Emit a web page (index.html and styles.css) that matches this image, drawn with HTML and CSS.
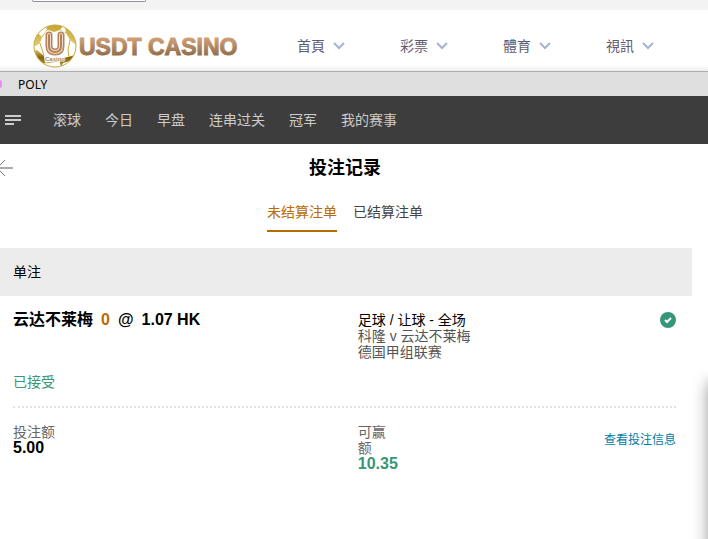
FILE: index.html
```
<!DOCTYPE html>
<html lang="zh">
<head>
  <meta charset="UTF-8" />
  <meta name="viewport" content="width=device-width, initial-scale=1" />
  <title>投注记录</title>
  <link rel="stylesheet" href="styles.css">
</head>
<body>
  <div class="top-strip">
    <button class="top-btn" type="button" aria-label="Menu"></button>
  </div>

  <header class="header">
    <a class="logo" href="#">
      <svg class="ball" width="46" height="46" viewBox="0 0 46 46" aria-hidden="true">
        <defs>
          <linearGradient id="gold" gradientUnits="userSpaceOnUse" x1="0" y1="0" x2="0" y2="46">
            <stop offset="0" stop-color="#c3a02c" />
            <stop offset="0.35" stop-color="#d9bc58" />
            <stop offset="0.55" stop-color="#e8d588" />
            <stop offset="0.75" stop-color="#86660a" />
            <stop offset="1" stop-color="#b89a3a" />
          </linearGradient>
          <clipPath id="ball-clip"><circle cx="23" cy="23" r="21" /></clipPath>
        </defs>
        <circle cx="23" cy="23" r="21" fill="#fff" />
        <g clip-path="url(#ball-clip)" fill="url(#gold)">
          <path d="M14 1 L24 1 L31 3 L28 7 L22 9 L15 7 Z" />
          <path d="M33 4 L46 14 L44 22 L38 17 L34 10 Z" />
          <path d="M0 14 L6 10 L10 14 L8 20 L4 23 L0 22 Z" />
          <path d="M0 28 L5 27 L12 33 L13 40 L8 42 L0 34 Z" />
          <path d="M27 36 L36 34 L43 32 L38 38 L31 40 L29 44 Z" />
        </g>
        <g fill="none" stroke="#c9a83e">
          <path d="M10 14 L15 7 M28 7 L34 10 M38 17 L36 27 L37 34 M8 20 L12 33 M13 40 L27 38" />
          <circle cx="23" cy="23" r="21" />
        </g>
        <g fill="none" stroke-linecap="round">
          <path d="M17 12 V23 Q17 29 23 29 Q29 29 29 23 V12" stroke="#fff" stroke-width="9" />
          <path d="M17 12 V23 Q17 29 23 29 Q29 29 29 23 V12" stroke="#b5835a" stroke-width="7" />
          <path d="M17 12 V23 Q17 29 23 29 Q29 29 29 23 V12" stroke="#ecd9ca" stroke-width="4" />
          <path d="M17 12 V23 Q17 29 23 29 Q29 29 29 23 V12" stroke="#b5835a" stroke-width="2" />
        </g>
        <text class="ball-text" x="23" y="38" text-anchor="middle">Casino</text>
      </svg>
      <svg class="wordmark" width="170" height="32" viewBox="0 0 170 32">
        <defs>
          <linearGradient id="bronze" gradientUnits="userSpaceOnUse" x1="0" y1="7" x2="0" y2="25">
            <stop offset="0" stop-color="#d3a27a" />
            <stop offset="1" stop-color="#93704a" />
          </linearGradient>
        </defs>
        <text class="wordmark-text" x="1" y="25" fill="url(#bronze)" stroke="url(#bronze)">USDT CASINO</text>
      </svg>
    </a>
    <nav class="main-nav">
      <a href="#">首頁 <svg width="12" height="8" viewBox="0 0 12 8"><path d="M1 1 L6 6 L11 1" /></svg></a>
      <a href="#">彩票 <svg width="12" height="8" viewBox="0 0 12 8"><path d="M1 1 L6 6 L11 1" /></svg></a>
      <a href="#">體育 <svg width="12" height="8" viewBox="0 0 12 8"><path d="M1 1 L6 6 L11 1" /></svg></a>
      <a href="#">視訊 <svg width="12" height="8" viewBox="0 0 12 8"><path d="M1 1 L6 6 L11 1" /></svg></a>
    </nav>
  </header>

  <div class="provider"><span class="provider-dot"></span>POLY</div>

  <nav class="sport-nav">
    <button class="menu-btn" type="button" aria-label="Menu">
      <svg width="16" height="12" viewBox="0 0 16 12"><path d="M0 2 H16 M0 6 H16 M0 10 H9" /></svg>
    </button>
    <a href="#">滚球</a>
    <a href="#">今日</a>
    <a href="#">早盘</a>
    <a href="#">连串过关</a>
    <a href="#">冠军</a>
    <a href="#">我的赛事</a>
  </nav>

  <main class="content">
    <div class="title-bar">
      <button class="back-btn" type="button" aria-label="Back">
        <svg width="13" height="18" viewBox="0 0 13 18"><path d="M5 1 L-3 9 L5 17" /><path class="shaft" d="M-3 9 H13" /></svg>
      </button>
      <h1>投注记录</h1>
    </div>

    <div class="tabs">
      <button class="tab active" type="button">未结算注单</button>
      <button class="tab" type="button">已结算注单</button>
    </div>

    <h2 class="bet-type">单注</h2>

    <section class="bet">
      <div class="bet-row bet-info">
        <div class="pick">
          <span>云达不莱梅</span>
          <span class="handicap">0</span>
          <span>@</span>
          <span>1.07 HK</span>
        </div>
        <div class="match">
          <div class="market">足球 / 让球 - 全场</div>
          <div>科隆 v 云达不莱梅</div>
          <div>德国甲组联赛</div>
        </div>
        <svg class="check" width="16" height="16" viewBox="0 0 16 16">
          <circle cx="8" cy="8" r="8" />
          <path d="M5 8 L7 10 L11 6" />
        </svg>
      </div>
      <div class="status">已接受</div>
      <div class="bet-row bet-money">
        <div>
          <div class="label">投注额</div>
          <div class="amount">5.00</div>
        </div>
        <div class="win">
          <div class="label">可赢额</div>
          <div class="amount green">10.35</div>
        </div>
        <a class="details" href="#">查看投注信息</a>
      </div>
    </section>
  </main>

  <aside class="side-panel"></aside>
</body>
</html>
```

FILE: styles.css
```
* {
  box-sizing: border-box;
}

body {
  margin: 0;
  min-height: 100vh;
  position: relative;
  overflow: hidden;
  background: #fff;
  color: #000;
  font-family: "Liberation Sans", "Noto Sans CJK SC", sans-serif;
  font-size: 14px;
}

a {
  text-decoration: none;
}

button {
  border: none;
  background: none;
  padding: 0;
  font: inherit;
  cursor: pointer;
}

.top-strip {
  height: 10px;
  padding-left: 32px;
  background: #f3f3f3;
}

.top-btn {
  display: block;
  width: 114px;
  height: 2px;
  border: 1px solid #8b90a8;
  border-top: none;
  border-radius: 0 0 4px 4px;
  background: #fff;
}

.header {
  display: flex;
  align-items: center;
  height: 62px;
  padding-left: 32px;
  border-bottom: 1px solid #adb0ad;
  background: linear-gradient(#fff 90%, #ededed);
}

.logo {
  display: flex;
  align-items: center;
  height: 46px;
  margin-top: 10px;
}

.ball-text {
  font-size: 6px;
  font-weight: bold;
  fill: #b5835a;
  stroke: #fff;
  stroke-width: 1px;
  paint-order: stroke;
}

.wordmark-text {
  font-size: 23px;
  font-weight: bold;
  stroke-width: 1px;
}

.main-nav {
  display: flex;
  gap: 55px;
  margin-top: 10px;
  padding-left: 49px;
}

.main-nav a {
  display: flex;
  align-items: center;
  gap: 8px;
  color: #5f5a72;
  font-family: "Liberation Sans", "Noto Sans CJK TC", sans-serif;
  line-height: 20px;
}

.main-nav svg {
  fill: none;
  stroke: #a9b3d2;
  stroke-width: 2px;
}

.provider {
  display: flex;
  align-items: center;
  gap: 16px;
  height: 24px;
  background: #dfdfdf;
  font-family: "Noto Sans", sans-serif;
  font-size: 12px;
}

.provider-dot {
  width: 2px;
  height: 8px;
  border-radius: 0 4px 4px 0;
  background: #ee8cf0;
}

.sport-nav {
  display: flex;
  align-items: center;
  gap: 24px;
  height: 48px;
  padding-left: 5px;
  background: #3d3d3d;
}

.sport-nav a {
  color: #ccc;
  line-height: 20px;
}

.menu-btn {
  display: flex;
  margin-right: 8px;
}

.menu-btn svg {
  fill: none;
  stroke: #ccc;
  stroke-width: 2px;
}

.content {
  margin-right: 16px;
}

.title-bar {
  display: flex;
  align-items: center;
  height: 48px;
}

.back-btn svg {
  display: block;
  fill: none;
  stroke: #777;
}

.back-btn .shaft {
  stroke: #aaa;
  stroke-width: 2px;
}

.title-bar h1 {
  flex: 1;
  margin: 0;
  padding-right: 15px;
  font-size: 18px;
  line-height: 24px;
  text-align: center;
}

.tabs {
  display: flex;
  justify-content: center;
  gap: 16px;
  height: 56px;
  padding-right: 2px;
}

.tab {
  height: 40px;
  border-bottom: 2px solid transparent;
  color: #444;
}

.tab.active {
  border-color: #b86b00;
  color: #b86b00;
}

.bet-type {
  margin: 0;
  padding: 0 13px;
  background: #ececec;
  font-size: 14px;
  font-weight: normal;
  line-height: 48px;
}

.bet {
  padding: 16px 16px 16px 13px;
}

.bet-row {
  display: grid;
  grid-template-columns: 52% 1fr auto;
}

.bet-info {
  min-height: 60px;
}

.pick {
  display: flex;
  gap: 8px;
  font-size: 16px;
  font-weight: bold;
  line-height: 16px;
}

.handicap {
  color: #b86b00;
}

.match {
  color: #555;
  line-height: 16px;
}

.market {
  color: #000;
}

.check {
  fill: #36967a;
}

.check path {
  fill: none;
  stroke: #fff;
  stroke-width: 2px;
}

.status {
  padding-bottom: 14px;
  border-bottom: 2px dotted #e3e3e3;
  color: #36967a;
  line-height: 20px;
}

.bet-money {
  padding-top: 16px;
}

.label {
  color: #666;
  line-height: 16px;
}

.win .label {
  width: 40px;
}

.amount {
  font-size: 16px;
  font-weight: bold;
  line-height: 16px;
}

.green {
  color: #36967a;
}

.details {
  align-self: start;
  margin-top: 8px;
  color: #007ca8;
  font-size: 12px;
  line-height: 16px;
}

/* closed panel: only its shadow shows at the right edge */
.side-panel {
  position: absolute;
  top: 382px;
  right: 0;
  bottom: 0;
  width: 0;
  box-shadow: 16px 16px 16px 16px rgba(0, 0, 0, 0.4);
}
```
